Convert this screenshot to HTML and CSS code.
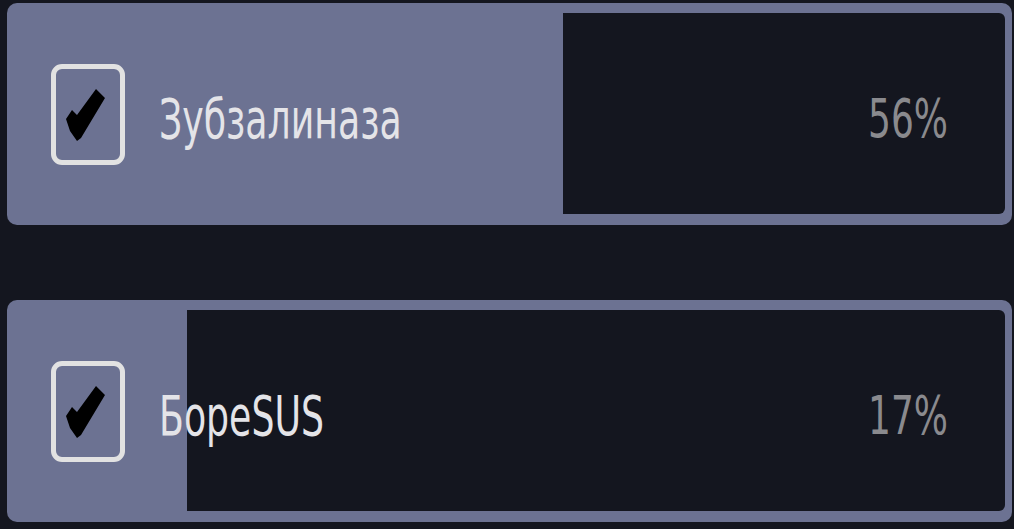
FILE: index.html
```html
<!DOCTYPE html>
<html lang="ru">
<head>
<meta charset="utf-8">
<title>Poll</title>
<link rel="stylesheet" href="styles.css">
</head>
<body>
<div class="poll">
  <div class="option">
    <div class="track"><div class="fill" style="width:55.7%"></div><div class="rest"></div></div>
    <div class="content">
      <div class="check">
        <svg viewBox="0 0 64 91" width="64" height="91"><polygon points="10,50 16,41 21,46 40,20 49,29 25,69 21,72 14,62" fill="#000"/></svg>
      </div>
      <span class="label">Зубзалиназа</span>
      <span class="pct">56%</span>
    </div>
  </div>
  <div class="option">
    <div class="track"><div class="fill" style="width:18%"></div><div class="rest"></div></div>
    <div class="content">
      <div class="check">
        <svg viewBox="0 0 64 91" width="64" height="91"><polygon points="10,50 16,41 21,46 40,20 49,29 25,69 21,72 14,62" fill="#000"/></svg>
      </div>
      <span class="label">БореSUS</span>
      <span class="pct">17%</span>
    </div>
  </div>
</div>
</body>
</html>
```
FILE: styles.css
```css
html, body {
  margin: 0;
  padding: 0;
  background: #14161f;
  width: 1014px;
  height: 529px;
  overflow: hidden;
}
.poll {
  display: flex;
  flex-direction: column;
  gap: 75px;
  padding: 3px 2px 0 7px;
}
.option {
  display: grid;
  height: 222px;
  background: #6c7292;
  border-radius: 10px;
}
.track, .content {
  grid-area: 1 / 1;
}
.track {
  display: flex;
  margin: 10px 7px 11px 0;
  border-radius: 0 6px 6px 0;
  overflow: hidden;
}
.fill {
  background: #6c7292;
  flex: none;
}
.rest {
  flex: 1;
  background: #14161f;
}
.content {
  display: flex;
  align-items: center;
  padding: 0 64px 0 44px;
  font-family: "DejaVu Sans Condensed", "DejaVu Sans", sans-serif;
}
.check {
  box-sizing: border-box;
  width: 74px;
  height: 101px;
  border: 5px solid #e2e2e2;
  border-radius: 11px;
  flex: none;
}
.check svg {
  display: block;
}
.label {
  margin-left: 34px;
  font-size: 56px;
  color: #e4e4e8;
  display: inline-block;
  transform: scaleX(0.72);
  transform-origin: left center;
  padding-top: 8px;
}
.pct {
  margin-left: auto;
  font-size: 54px;
  color: #8a8a8e;
  display: inline-block;
  transform: scaleX(0.74);
  transform-origin: right center;
  padding-top: 8px;
}
```
